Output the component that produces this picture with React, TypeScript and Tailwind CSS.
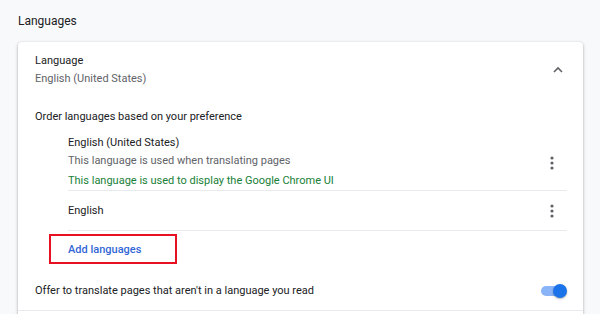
import React from "react";

function Kebab() {
  return (
    <svg width="4" height="14" viewBox="0 0 4 14" className="block">
      <circle cx="2" cy="2" r="1.6" fill="#5f6368" />
      <circle cx="2" cy="7" r="1.6" fill="#5f6368" />
      <circle cx="2" cy="12" r="1.6" fill="#5f6368" />
    </svg>
  );
}

export default function App() {
  return (
    <div
      className="w-[600px] h-[314px] overflow-hidden bg-[#f8f9fa] text-[11px] text-[#202124]"
      style={{ fontFamily: "Roboto, 'Liberation Sans', sans-serif" }}
    >
      <div className="pt-[11px] pl-[18px] leading-[20px] text-[12px]">Languages</div>
      <div className="mt-[11px] ml-[18px] w-[565px] h-[300px] bg-white rounded-t-[4px] shadow-[0_1px_2px_rgba(60,64,67,0.3),0_1px_3px_1px_rgba(60,64,67,0.15)]">
        <div className="flex items-center pt-[10px] pl-[17px] pr-[15px]">
          <div className="flex-1">
            <div className="leading-[17px]">Language</div>
            <div className="mt-[1px] leading-[17px] text-[#5f6368]">English (United States)</div>
          </div>
          <div className="w-[20px] h-[20px] flex items-center justify-center">
            <svg width="12" height="8" viewBox="0 0 12 8">
              <polyline points="2,6 6,2 10,6" fill="none" stroke="#5f6368" strokeWidth="1.6" />
            </svg>
          </div>
        </div>
        <div className="pl-[17px] pr-[16px]">
          <div className="mt-[20px] leading-[20px]">Order languages based on your preference</div>
          <div className="ml-[33px]">
            <div className="flex h-[64px] border-b border-[#e8eaed]">
              <div className="flex-1 pt-[7px]">
                <div className="leading-[18px]">English (United States)</div>
                <div className="leading-[18px] text-[#5f6368]">This language is used when translating pages</div>
                <div className="mt-[2px] leading-[18px] text-[#188038]">This language is used to display the Google Chrome UI</div>
              </div>
              <div className="pt-[29px] pr-[13px]">
                <Kebab />
              </div>
            </div>
            <div className="flex items-center h-[40px] border-b border-[#e8eaed]">
              <div className="flex-1 leading-[20px]">English</div>
              <div className="pr-[13px]">
                <Kebab />
              </div>
            </div>
          </div>
          <div className="mt-[3px] ml-[14px] w-[128px] h-[30px] border-2 border-[#e81123] flex items-center pl-[17px] pt-[2px]">
            <span className="font-medium text-[#3367d6] leading-[20px]">Add languages</span>
          </div>
          <div className="mt-[17px] flex items-center h-[20px]">
            <div className="flex-1 leading-[20px]">Offer to translate pages that aren't in a language you read</div>
            <div className="relative w-[26px] h-[16px]">
              <div className="absolute left-0 top-[3px] w-[22px] h-[10px] rounded-full bg-[#8ab4f8]" />
              <div className="absolute right-0 top-[1px] w-[14px] h-[14px] rounded-full bg-[#1a73e8] shadow-[0_1px_2px_rgba(0,0,0,0.3)]" />
            </div>
          </div>
        </div>
        <div className="mt-[9px] border-t border-[#e8eaed]" />
      </div>
    </div>
  );
}
